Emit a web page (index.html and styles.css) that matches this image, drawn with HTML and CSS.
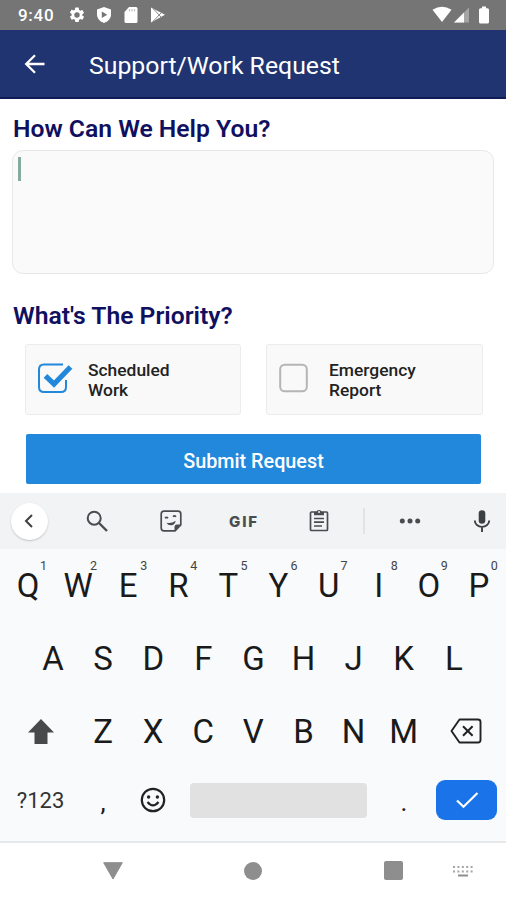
FILE: index.html
```
<!DOCTYPE html>
<html lang="en">
<head>
  <meta charset="UTF-8" />
  <meta name="viewport" content="width=device-width, initial-scale=1.0"/>
  <title>Support/Work Request</title>
  <link rel="stylesheet" href="styles.css">
</head>
<body>

  <div class="status">
    <span class="status__time">9:40</span>
    <svg class="status__gear" width="18" height="18" viewBox="0 0 24 24"><path fill="#fff" d="M19.14 12.94c.04-.3.06-.61.06-.94s-.02-.64-.07-.94l2.03-1.58a.49.49 0 0 0 .12-.61l-1.92-3.32a.49.49 0 0 0-.59-.22l-2.39.96a7 7 0 0 0-1.62-.94l-.36-2.54A.48.48 0 0 0 13.92 2h-3.84a.48.48 0 0 0-.47.41l-.36 2.54a7.3 7.3 0 0 0-1.62.94l-2.39-.96a.48.48 0 0 0-.59.22L2.74 8.47a.48.48 0 0 0 .12.61l2.03 1.58a7.7 7.7 0 0 0 0 1.88l-2.03 1.58a.49.49 0 0 0-.12.61l1.92 3.32c.12.22.37.29.59.22l2.39-.96c.5.38 1.03.7 1.62.94l.36 2.54c.05.24.24.41.48.41h3.84c.24 0 .44-.17.47-.41l.36-2.54a7 7 0 0 0 1.62-.94l2.39.96c.22.08.47 0 .59-.22l1.92-3.32a.48.48 0 0 0-.12-.61zM12 15.6a3.6 3.6 0 1 1 0-7.2 3.6 3.6 0 0 1 0 7.2z"/></svg>
    <svg class="status__shield" width="16" height="18" viewBox="0 0 16 18"><path fill="#fff" d="M8 1l7 2.600v5c0 4-3 7.200-7 8.400-4-1.200-7-4.400-7-8.400v-5z"/><path fill="#757575" d="M5.800 5.600l5.400 3.200-5.400 3.200z"/></svg>
    <svg class="status__sd" width="14" height="18" viewBox="0 0 14 18"><path fill="#fff" d="M5 1h7q1.500 0 1.500 1.500v13q0 1.500-1.500 1.500H2q-1.500 0-1.500-1.500V6z"/><path stroke="#c4c4c4" stroke-width="1.200" d="M5.500 3v2.500M8 3v2.500M10.500 3v2.500"/></svg>
    <svg class="status__play" width="16" height="18" viewBox="0 0 16 18"><path fill="#fff" d="M1 1.500l14 7.300L1 16.500z"/><path fill="none" stroke="#858585" d="M3 2.500l8.500 9M3 15.500l8.500-9"/></svg>
    <div class="status__right">
      <svg width="20" height="18" viewBox="0 0 20 18"><path fill="#fff" d="M.5 3.800Q10-2.200 19.500 3.800L10 16z"/></svg>
      <svg width="16" height="18" viewBox="0 0 16 18"><path fill="#a5a5a5" d="M15 1.500V16.500H0z"/><path fill="#fff" d="M10 6.500v10H0z"/></svg>
      <svg class="status__battery" width="12" height="18" viewBox="0 0 12 18"><path fill="#fff" d="M4 .5h4v1.700h1.500q1.500 0 1.500 1.500V16q0 1.500-1.500 1.500h-7Q1 17.500 1 16V3.700q0-1.500 1.500-1.500H4z"/></svg>
    </div>
  </div>

  <header class="appbar">
    <svg class="appbar__back" width="22" height="20" viewBox="0 0 22 20"><path fill="none" stroke="#fff" stroke-width="2.300" d="M20.500 10H2.500M11 1.200L2.200 10l8.800 8.800"/></svg>
    <h1 class="appbar__title">Support/Work Request</h1>
  </header>

  <main class="form">
    <h2 class="form__heading">How Can We Help You?</h2>
    <div class="message"><span class="message__caret"></span></div>

    <h2 class="form__heading form__heading--priority">What's The Priority?</h2>
    <div class="options">
      <div class="option">
        <svg class="option__box" width="36" height="32" viewBox="0 0 36 32"><path fill="none" stroke="#2188dc" stroke-width="2" d="M26 2.500H7Q2 2.500 2 7.500V25q0 5 5 5h17q5 0 5-5v-7"/><path fill="none" stroke="#2188dc" stroke-width="5.200" d="M8.500 13.800L17 22 33.500 5"/></svg>
        <span class="option__label">Scheduled<br>Work</span>
      </div>
      <div class="option">
        <svg class="option__box" width="36" height="32" viewBox="0 0 36 32"><rect x="2.200" y="2.700" width="26.600" height="26.600" rx="4.500" fill="none" stroke="#b5b5b5" stroke-width="2"/></svg>
        <span class="option__label">Emergency<br>Report</span>
      </div>
    </div>
    <button class="btn">Submit Request</button>
  </main>

  <div class="keyboard">
    <div class="tools">
      <span class="tools__back"><svg width="12" height="16" viewBox="0 0 12 16"><path fill="none" stroke="#3c4043" stroke-width="2" d="M9 2L3 8l6 6"/></svg></span>
      <svg width="22" height="22" viewBox="0 0 22 22"><g fill="none" stroke="#4a4d50"><circle cx="8.200" cy="8.200" r="6.500" stroke-width="2"/><path stroke-width="2.400" d="M13 13l8 8"/></g></svg>
      <svg width="22" height="22" viewBox="0 0 22 22"><path fill="none" stroke="#4a4d50" stroke-width="1.700" d="M4 1.200h14q2.800 0 2.800 2.800v11L15 20.800H4Q1.200 20.800 1.200 18V4Q1.200 1.200 4 1.200z"/><path fill="#4a4d50" d="M20.800 14.500L14.500 21v-4q0-2.500 2.500-2.500z"/><path fill="none" stroke="#4a4d50" stroke-width="1.600" d="M5 8.300q1.500-1.800 3 0M13 6.800q1.500-1.800 3 0"/><path fill="#4a4d50" d="M6.500 12.700q5 1 9.200-2-.8 4.300-4.500 4.600-3.300.2-4.700-2.600z"/></svg>
      <span class="tools__gif">GIF</span>
      <svg class="tools__clip" width="22" height="24" viewBox="0 0 22 24"><path fill="none" stroke="#4a4d50" stroke-width="1.700" d="M3.500 4h15q1 0 1 1v16.500q0 1-1 1h-15q-1 0-1-1V5q0-1 1-1z"/><path fill="#4a4d50" d="M6 4h2.300a2.800 2.800 0 0 1 5.400 0H16v3.200H6z"/><circle cx="11" cy="4" r="1" fill="#f1f3f4"/><path stroke="#4a4d50" stroke-width="1.700" d="M6 10.500h10M6 14.200h10M6 18h8"/></svg>
      <span class="tools__divider"></span>
      <svg width="22" height="6" viewBox="0 0 22 6"><g fill="#4a4d50"><circle cx="3.300" cy="3" r="2.500"/><circle cx="11" cy="3" r="2.500"/><circle cx="18.700" cy="3" r="2.500"/></g></svg>
      <svg width="18" height="22" viewBox="0 0 18 22"><rect x="5.700" y=".3" width="6.600" height="13.500" rx="3.300" fill="#3c4043"/><path fill="none" stroke="#3c4043" stroke-width="1.900" d="M1.800 10.500a7.200 6.400 0 0 0 14.400 0M9 17v5"/></svg>
    </div>

    <div class="keys">
      <span class="key">Q<sup>1</sup></span>
      <span class="key">W<sup>2</sup></span>
      <span class="key">E<sup>3</sup></span>
      <span class="key">R<sup>4</sup></span>
      <span class="key">T<sup>5</sup></span>
      <span class="key">Y<sup>6</sup></span>
      <span class="key">U<sup>7</sup></span>
      <span class="key">I<sup>8</sup></span>
      <span class="key">O<sup>9</sup></span>
      <span class="key">P<sup>0</sup></span>
    </div>
    <div class="keys keys--middle">
      <span class="key">A</span>
      <span class="key">S</span>
      <span class="key">D</span>
      <span class="key">F</span>
      <span class="key">G</span>
      <span class="key">H</span>
      <span class="key">J</span>
      <span class="key">K</span>
      <span class="key">L</span>
    </div>
    <div class="keys keys--lower">
      <span class="key"><svg width="26" height="25" viewBox="0 0 26 25"><path fill="#48494a" d="M13 0l13 13.500h-6.500V25h-13V13.500H0z"/></svg></span>
      <span class="key">Z</span>
      <span class="key">X</span>
      <span class="key">C</span>
      <span class="key">V</span>
      <span class="key">B</span>
      <span class="key">N</span>
      <span class="key">M</span>
      <span class="key"><svg width="32" height="26" viewBox="0 0 32 26"><path fill="none" stroke="#222" stroke-width="1.900" stroke-linejoin="round" d="M9.500 1.500H28q2.500 0 2.500 2.500v18q0 2.500-2.500 2.500H9.500L1.500 13z"/><path stroke="#222" stroke-width="2" d="M13 8.200l9.600 9.600M22.600 8.200L13 17.800"/></svg></span>
    </div>
    <div class="keys keys--bottom">
      <span class="key key--symbols">?123</span>
      <span class="key key--comma">,</span>
      <span class="key"><svg width="26" height="26" viewBox="0 0 26 26"><circle cx="13" cy="13" r="11.200" fill="none" stroke="#222" stroke-width="2.200"/><circle cx="8.600" cy="10" r="1.700" fill="#222"/><circle cx="17.400" cy="10" r="1.700" fill="#222"/><path fill="none" stroke="#222" stroke-width="2.100" d="M7.500 15q5.500 6.800 11 0"/></svg></span>
      <span class="key key--space"></span>
      <span class="key key--period">.</span>
      <span class="key key--enter"><svg width="24" height="18" viewBox="0 0 24 18"><path fill="none" stroke="#fff" stroke-width="2.200" d="M2 9.500l6.500 6.300L22.500 2"/></svg></span>
    </div>
  </div>

  <nav class="navbar">
    <svg width="20" height="18" viewBox="0 0 20 18"><path fill="#8e8e8e" stroke="#8e8e8e" stroke-linejoin="round" d="M.700.700h18.600L10 17z"/></svg>
    <span class="navbar__home"></span>
    <span class="navbar__recent"></span>
    <svg class="navbar__keyboard" width="20" height="12" viewBox="0 0 20 12"><path fill="none" stroke="#a5a5a5" stroke-width="2" stroke-dasharray="2 2.400" d="M0 2h20M0 6.500h20"/><path stroke="#8e8e8e" stroke-width="2" d="M5 10.500h10"/></svg>
  </nav>

</body>
</html>
```
FILE: styles.css
```
:root {
  --navy: #1f3470;
  --heading: #101060;
  --blue: #2188dc;
  --gray: #8e8e8e;
}

* {
  box-sizing: border-box;
}

body {
  font-family: Roboto, sans-serif;
  background-color: #fff;
  margin: 0;
  width: 506px;
  height: 900px;
  overflow: hidden;
}

svg {
  display: block;
  flex: none;
}

.status {
  display: flex;
  align-items: center;
  height: 30px;
  padding: 0 16px 0 18px;
  background-color: #757575;
  color: #fff;
}

.status__time {
  width: 50px;
  font-size: 17px;
  font-weight: 500;
  letter-spacing: 0.7px;
}

.status__shield {
  margin-left: 10px;
}

.status__sd {
  margin-left: 12px;
}

.status__play {
  margin-left: 12px;
}

.status__right {
  display: flex;
  margin-left: auto;
  gap: 2px;
}

.status__battery {
  margin-left: 6px;
}

.appbar {
  display: flex;
  align-items: center;
  height: 69px;
  padding: 1px 24px 0;
  background-color: var(--navy);
  border-bottom: 2px solid #0f1c58;
  color: #fff;
}

.appbar__title {
  margin: 4px 0 0 43px;
  font-size: 24.8px;
  font-weight: 400;
  line-height: 30px;
}

.form {
  height: 394px;
  padding: 15px 12px 0;
}

.form__heading {
  margin: 0 0 6px 1px;
  font-size: 24.7px;
  font-weight: 600;
  line-height: 30px;
  color: var(--heading);
}

.form__heading--priority {
  margin: 27px 0 13px 1px;
}

.message {
  height: 124px;
  padding: 6px 5px;
  background-color: #fafafa;
  border: 1px solid #e8e8e8;
  border-radius: 11px;
}

.message__caret {
  display: block;
  width: 3px;
  height: 24px;
  background-color: #86aa9f;
}

.options {
  display: grid;
  grid-template-columns: 216px 217px;
  gap: 25px;
  margin-left: 13px;
}

.option {
  display: flex;
  align-items: center;
  height: 71px;
  padding-left: 11px;
  background-color: #f9f9f9;
  border: 1px solid #ececec;
  border-radius: 3px;
}

.option__box {
  margin-bottom: 3px;
}

.option__label {
  margin: 1px 0 0 15px;
  font-size: 17.4px;
  font-weight: 500;
  line-height: 20px;
  color: #222;
}

.btn {
  display: block;
  width: 455px;
  height: 50px;
  margin: 19px 0 0 14px;
  padding: 4px 0 0;
  border: none;
  border-radius: 2px;
  background-color: var(--blue);
  color: #fff;
  font-family: Roboto, sans-serif;
  font-size: 19.8px;
  font-weight: 500;
}

.keyboard {
  height: 350px;
  background-color: #f8fafc;
  border-bottom: 2px solid #e6e8e9;
}

.tools {
  display: grid;
  grid-template-columns: 58px 78px 70px 76px 74px 16px 76px 68px;
  align-items: center;
  justify-items: center;
  height: 56px;
  background-color: #f1f3f4;
}

.tools__back {
  display: flex;
  align-items: center;
  justify-content: center;
  width: 37px;
  height: 37px;
  border-radius: 50%;
  background-color: #fff;
  box-shadow: 0 1px 2px rgba(0, 0, 0, 0.2);
}

.tools__gif {
  font-family: Inter, sans-serif;
  font-size: 15px;
  font-weight: 800;
  letter-spacing: 1.8px;
  color: #4a4d50;
}

.tools__clip {
  margin-bottom: 3px;
}

.tools__divider {
  width: 2px;
  height: 26px;
  background-color: #e1e3e5;
}

.keys {
  display: grid;
  grid-template-columns: repeat(10, 50.1px);
  height: 73px;
  padding: 0 3px;
}

.keys--middle {
  grid-template-columns: repeat(9, 50.1px);
  padding: 0 28px;
}

.keys--lower {
  grid-template-columns: 75px repeat(7, 50.1px) 75px;
  height: 72px;
}

.keys--bottom {
  grid-template-columns: 75px 50px 50px 201px 50px 75px;
  height: 66px;
}

.key {
  position: relative;
  display: flex;
  align-items: center;
  justify-content: center;
  font-size: 33px;
  color: #1a1a1a;
}

.key sup {
  position: absolute;
  top: 9px;
  left: 37px;
  font-size: 12.5px;
  line-height: 16px;
  color: #444;
}

.key--symbols {
  font-size: 22px;
  color: #333;
}

.key--comma,
.key--period {
  font-size: 26px;
  padding-top: 3px;
}

.key--space {
  align-self: center;
  justify-self: center;
  width: 177px;
  height: 35px;
  border-radius: 4px;
  background-color: #e1e1e1;
}

.key--enter {
  align-self: center;
  justify-self: center;
  width: 61px;
  height: 40px;
  border-radius: 9px;
  background-color: #1a73e8;
}

.navbar {
  display: flex;
  align-items: center;
  height: 55px;
  padding-left: 103px;
}

.navbar__home {
  width: 18px;
  height: 18px;
  margin-left: 121px;
  border-radius: 50%;
  background-color: var(--gray);
}

.navbar__recent {
  width: 19px;
  height: 19px;
  margin-left: 122px;
  border-radius: 2px;
  background-color: var(--gray);
}

.navbar__keyboard {
  margin-left: 50px;
}
```
